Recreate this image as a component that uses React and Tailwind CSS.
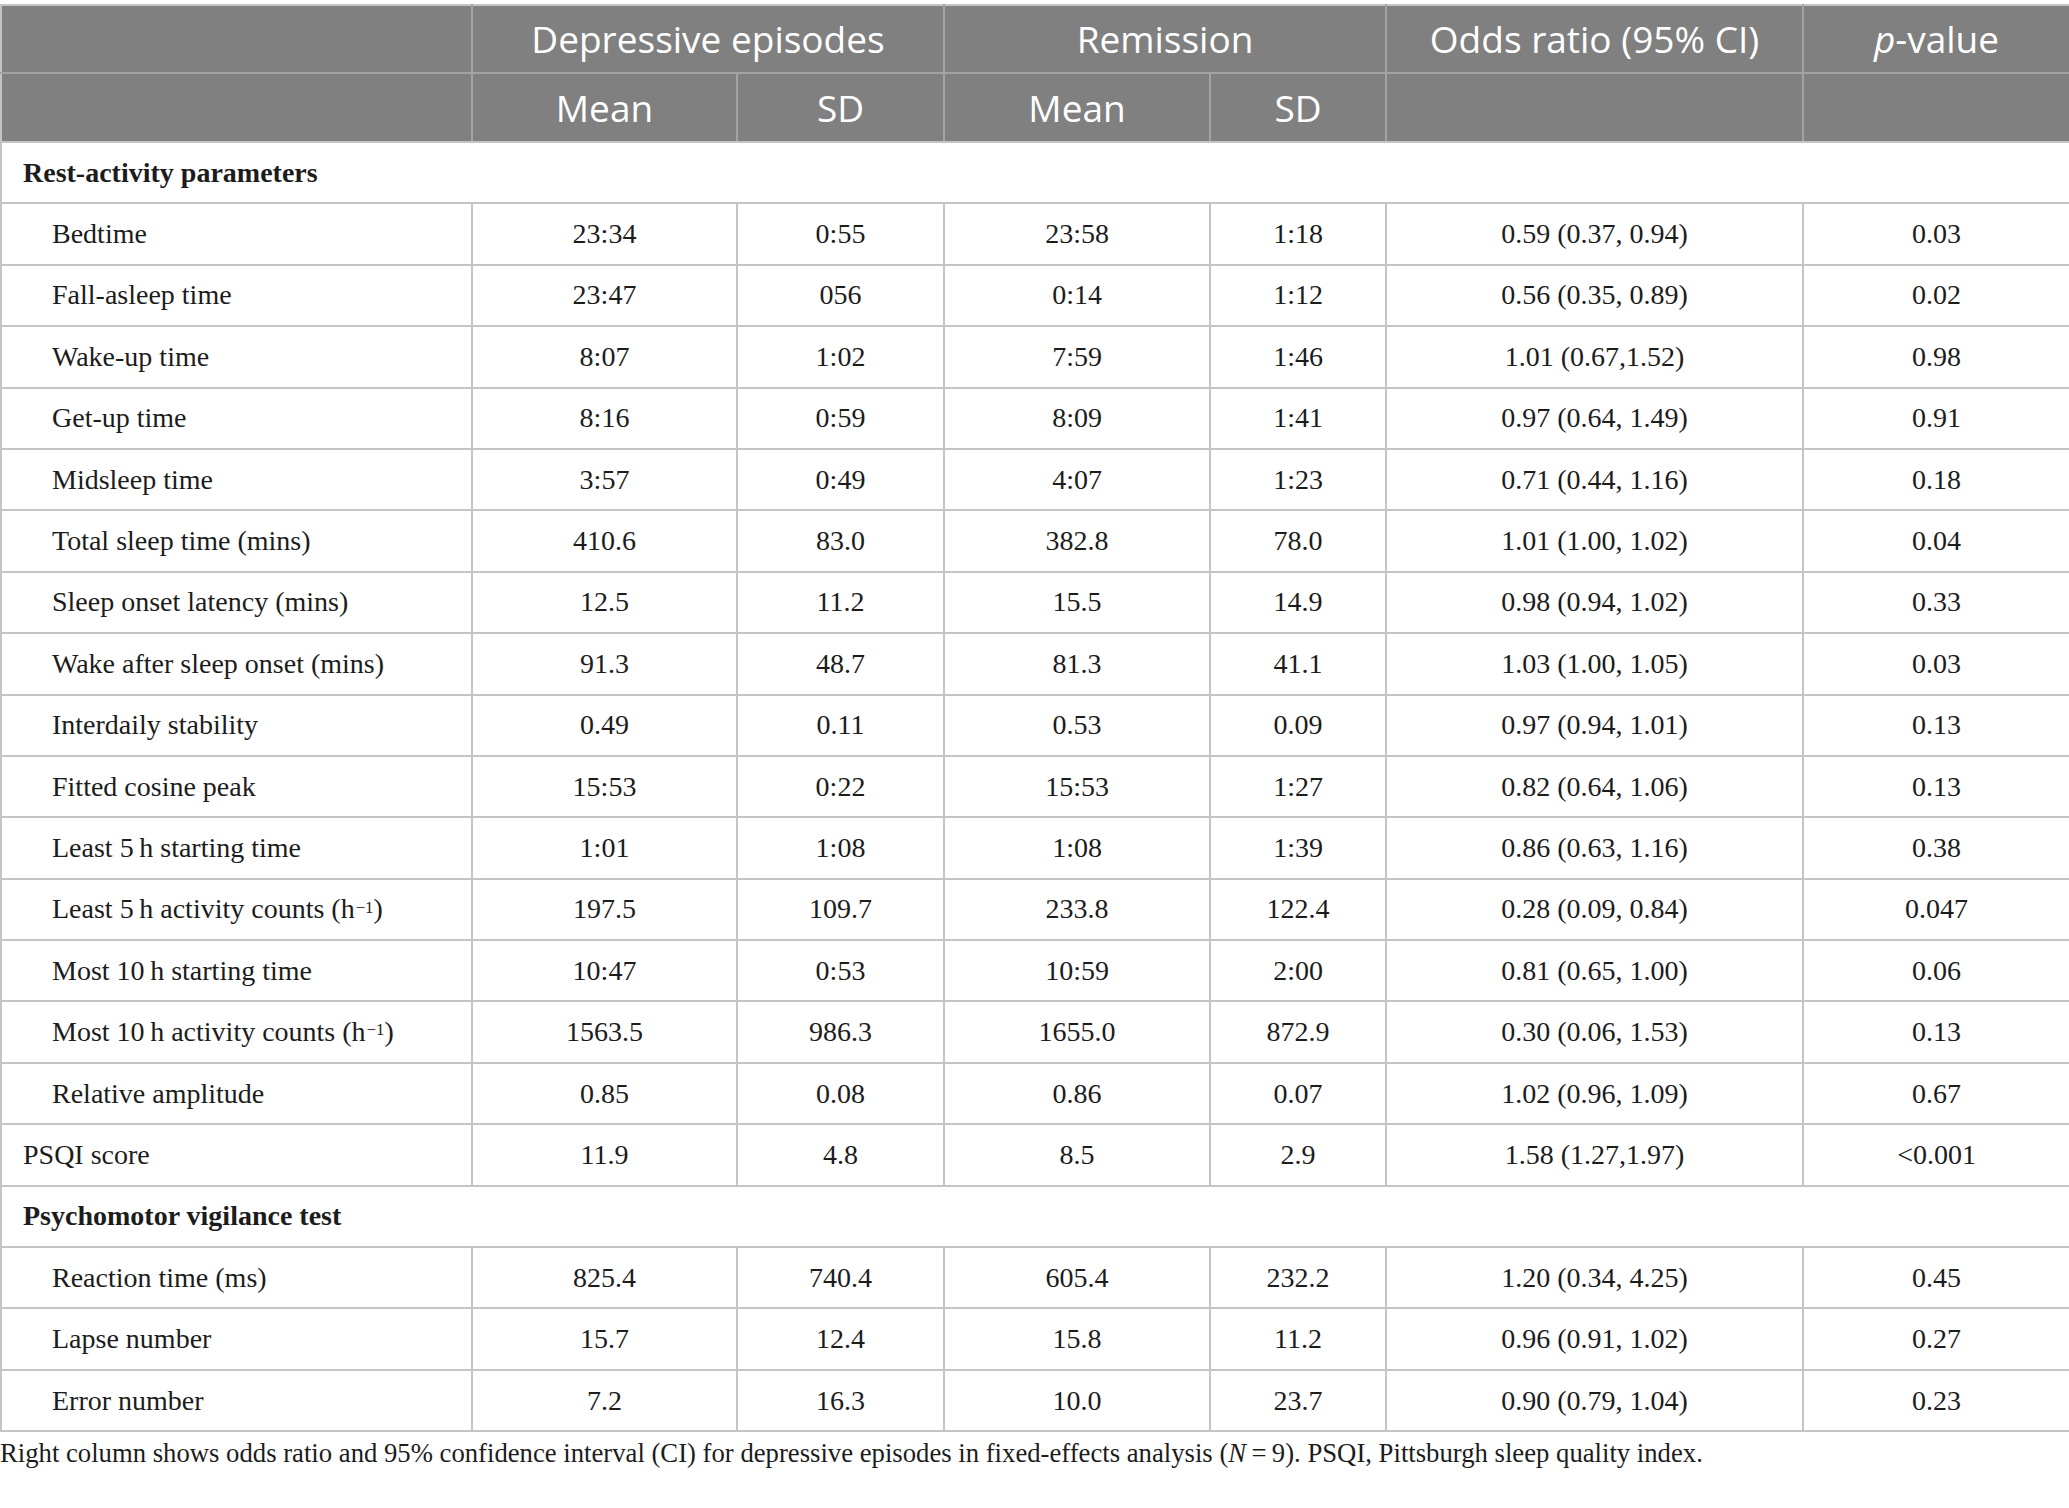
import React from "react";

const serif = { fontFamily: '"Liberation Serif", "Times New Roman", serif' };

const Sup = () => (
  <sup className="text-[0.6em] relative -top-[0.35em] ml-[1px]">−1</sup>
);

const rows = [
  { type: "section", label: "Rest-activity parameters" },
  { label: "Bedtime", v: ["23:34", "0:55", "23:58", "1:18", "0.59 (0.37, 0.94)", "0.03"] },
  { label: "Fall-asleep time", v: ["23:47", "056", "0:14", "1:12", "0.56 (0.35, 0.89)", "0.02"] },
  { label: "Wake-up time", v: ["8:07", "1:02", "7:59", "1:46", "1.01 (0.67,1.52)", "0.98"] },
  { label: "Get-up time", v: ["8:16", "0:59", "8:09", "1:41", "0.97 (0.64, 1.49)", "0.91"] },
  { label: "Midsleep time", v: ["3:57", "0:49", "4:07", "1:23", "0.71 (0.44, 1.16)", "0.18"] },
  { label: "Total sleep time (mins)", v: ["410.6", "83.0", "382.8", "78.0", "1.01 (1.00, 1.02)", "0.04"] },
  { label: "Sleep onset latency (mins)", v: ["12.5", "11.2", "15.5", "14.9", "0.98 (0.94, 1.02)", "0.33"] },
  { label: "Wake after sleep onset (mins)", v: ["91.3", "48.7", "81.3", "41.1", "1.03 (1.00, 1.05)", "0.03"] },
  { label: "Interdaily stability", v: ["0.49", "0.11", "0.53", "0.09", "0.97 (0.94, 1.01)", "0.13"] },
  { label: "Fitted cosine peak", v: ["15:53", "0:22", "15:53", "1:27", "0.82 (0.64, 1.06)", "0.13"] },
  { label: "Least 5\u2009h starting time", v: ["1:01", "1:08", "1:08", "1:39", "0.86 (0.63, 1.16)", "0.38"] },
  { label: <>Least 5{"\u2009"}h activity counts (h<Sup />)</>, v: ["197.5", "109.7", "233.8", "122.4", "0.28 (0.09, 0.84)", "0.047"] },
  { label: "Most 10\u2009h starting time", v: ["10:47", "0:53", "10:59", "2:00", "0.81 (0.65, 1.00)", "0.06"] },
  { label: <>Most 10{"\u2009"}h activity counts (h<Sup />)</>, v: ["1563.5", "986.3", "1655.0", "872.9", "0.30 (0.06, 1.53)", "0.13"] },
  { label: "Relative amplitude", v: ["0.85", "0.08", "0.86", "0.07", "1.02 (0.96, 1.09)", "0.67"] },
  { label: "PSQI score", flat: true, v: ["11.9", "4.8", "8.5", "2.9", "1.58 (1.27,1.97)", "<0.001"] },
  { type: "section", label: "Psychomotor vigilance test" },
  { label: "Reaction time (ms)", v: ["825.4", "740.4", "605.4", "232.2", "1.20 (0.34, 4.25)", "0.45"] },
  { label: "Lapse number", v: ["15.7", "12.4", "15.8", "11.2", "0.96 (0.91, 1.02)", "0.27"] },
  { label: "Error number", v: ["7.2", "16.3", "10.0", "23.7", "0.90 (0.79, 1.04)", "0.23"] },
];

export default function App() {
  return (
    <div className="w-[2069px] bg-white pt-[4px]" style={serif}>
      <table className="w-[2069px] table-fixed border-collapse text-[28px] text-[#1c1c1c]">
        <colgroup>
          <col className="w-[471px]" />
          <col className="w-[265px]" />
          <col className="w-[207px]" />
          <col className="w-[266px]" />
          <col className="w-[176px]" />
          <col className="w-[417px]" />
          <col className="w-[267px]" />
        </colgroup>
        <thead
          className="bg-[#808080] text-white text-[37px] font-normal"
          style={{ fontFamily: '"Open Sans", "Noto Sans", sans-serif' }}
        >
          <tr className="h-[68px]">
            <th className="border-2 border-[#c4c4c4] border-r-[#a3a3a3] border-b-[#a3a3a3] font-normal"></th>
            <th colSpan={2} className="border-2 border-[#a3a3a3] border-t-[#c4c4c4] font-normal">Depressive episodes</th>
            <th colSpan={2} className="border-2 border-[#a3a3a3] border-t-[#c4c4c4] font-normal">Remission</th>
            <th className="border-2 border-[#a3a3a3] border-t-[#c4c4c4] font-normal">Odds ratio (95% CI)</th>
            <th className="border-2 border-[#a3a3a3] border-t-[#c4c4c4] border-r-[#c4c4c4] font-normal">
              <i>p</i>-value
            </th>
          </tr>
          <tr className="h-[69px]">
            <th className="border-2 border-[#a3a3a3] border-l-[#c4c4c4] border-b-[#c4c4c4] font-normal"></th>
            <th className="border-2 border-[#a3a3a3] border-b-[#c4c4c4] font-normal">Mean</th>
            <th className="border-2 border-[#a3a3a3] border-b-[#c4c4c4] font-normal">SD</th>
            <th className="border-2 border-[#a3a3a3] border-b-[#c4c4c4] font-normal">Mean</th>
            <th className="border-2 border-[#a3a3a3] border-b-[#c4c4c4] font-normal">SD</th>
            <th className="border-2 border-[#a3a3a3] border-b-[#c4c4c4] font-normal"></th>
            <th className="border-2 border-[#a3a3a3] border-r-[#c4c4c4] border-b-[#c4c4c4] font-normal"></th>
          </tr>
        </thead>
        <tbody>
          {rows.map((r, i) =>
            r.type === "section" ? (
              <tr key={i} className="h-[61.4px]">
                <td colSpan={7} className="border-2 border-[#c4c4c4] pl-[21px] font-bold">
                  {r.label}
                </td>
              </tr>
            ) : (
              <tr key={i} className="h-[61.4px]">
                <td className={`border-2 border-[#c4c4c4] ${r.flat ? "pl-[21px]" : "pl-[50px]"}`}>
                  {r.label}
                </td>
                {r.v.map((c, j) => (
                  <td key={j} className="border-2 border-[#c4c4c4] text-center">
                    {c}
                  </td>
                ))}
              </tr>
            )
          )}
        </tbody>
      </table>
      <p className="mt-[4px] text-[26.7px] leading-[34px] text-[#1c1c1c]">
        Right column shows odds ratio and 95% confidence interval (CI) for depressive episodes in fixed-effects analysis (<i>N</i>{"\u2009"}={"\u2009"}9). PSQI, Pittsburgh sleep quality index.
      </p>
    </div>
  );
}
